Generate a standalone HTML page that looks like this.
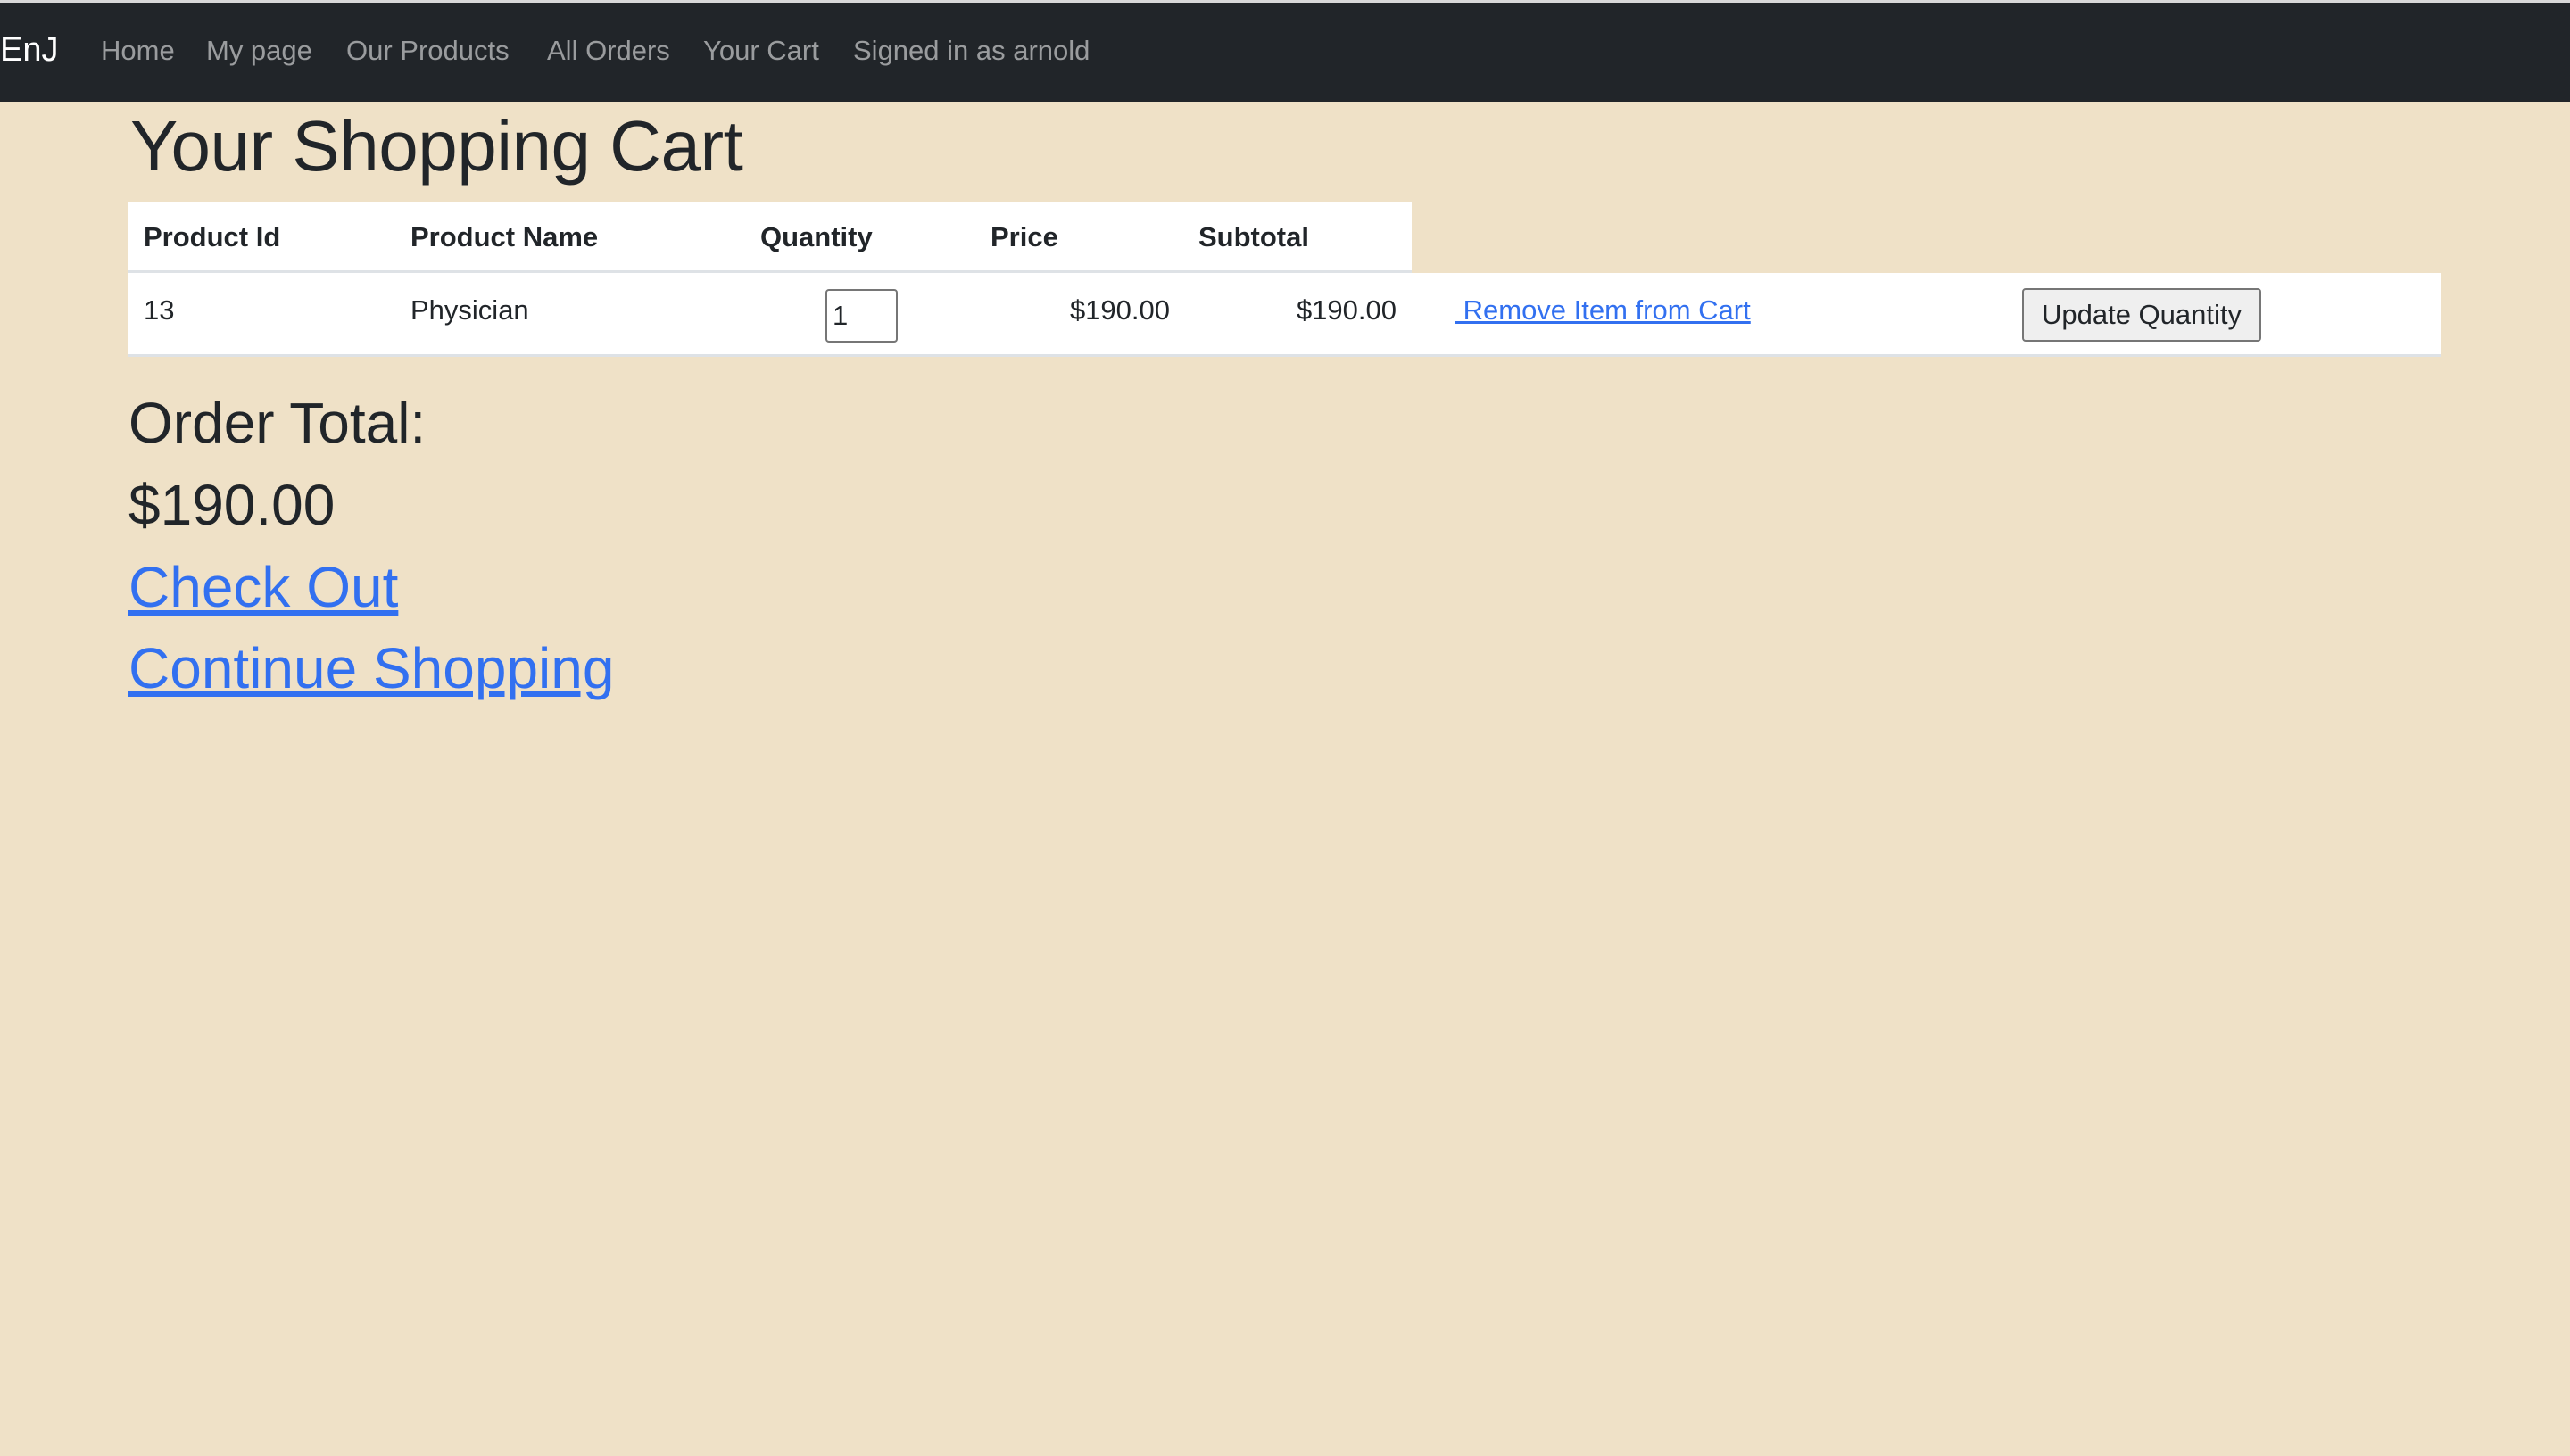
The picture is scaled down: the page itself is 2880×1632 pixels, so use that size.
<!DOCTYPE html>
<html><head><meta charset="utf-8"><style>
*{margin:0;padding:0;box-sizing:border-box}
body{width:2880px;height:1632px;background:#efe1c7;font-family:"Liberation Sans",sans-serif;color:#212529;position:relative;overflow:hidden}
.top{position:absolute;left:0;top:0;width:2880px;height:3px;background:#d8d8d8}
.nav{position:absolute;left:0;top:3px;width:2880px;height:111px;background:#212529}
.nav span{position:absolute;top:36px;font-size:31px;color:rgba(255,255,255,.55);white-space:nowrap}
.nav .brand{color:#fff;font-size:38px;top:32px;left:0}
h1{position:absolute;left:146px;top:118px;font-size:80px;font-weight:500;letter-spacing:-0.5px;white-space:nowrap}
.hdr{position:absolute;left:144px;top:226px;width:1438px;height:80px;background:#fff;border-bottom:3px solid #dee2e6}
.row{position:absolute;left:144px;top:306px;width:2592px;height:94px;background:#fff;border-bottom:3px solid #dee2e6}
.th{position:absolute;top:248px;font-size:31px;font-weight:bold;white-space:nowrap}
.td{position:absolute;top:330px;font-size:31px;white-space:nowrap}
.inp{position:absolute;left:925px;top:324px;width:81px;height:60px;border:2px solid #767676;border-radius:4px;background:#fff;font-size:31px;padding:10px 0 0 6px}
.btn{position:absolute;left:2266px;top:323px;width:268px;height:60px;border:2px solid #767676;border-radius:4px;background:#efefef;font-size:31px;text-align:center;line-height:56px}
.lnk{color:#3270f0;text-decoration:underline}
.big{position:absolute;left:144px;font-size:64px;white-space:nowrap}
</style></head><body>
<div class="top"></div>
<div class="nav">
<span class="brand">EnJ</span>
<span style="left:113px">Home</span>
<span style="left:231px">My page</span>
<span style="left:388px">Our Products</span>
<span style="left:613px">All Orders</span>
<span style="left:788px">Your Cart</span>
<span style="left:956px">Signed in as arnold</span>
</div>
<h1>Your Shopping Cart</h1>
<div class="hdr"></div>
<div class="row"></div>
<div class="th" style="left:161px">Product Id</div>
<div class="th" style="left:460px">Product Name</div>
<div class="th" style="left:852px">Quantity</div>
<div class="th" style="left:1110px">Price</div>
<div class="th" style="left:1343px">Subtotal</div>
<div class="td" style="left:161px">13</div>
<div class="td" style="left:460px">Physician</div>
<div class="inp">1</div>
<div class="td" style="left:1150px;width:161px;text-align:right">$190.00</div>
<div class="td" style="left:1400px;width:165px;text-align:right">$190.00</div>
<div class="td lnk" style="left:1631px">&nbsp;Remove Item from Cart</div>
<div class="btn">Update Quantity</div>
<div class="big" style="top:437px">Order Total:</div>
<div class="big" style="top:529px;font-weight:500">$190.00</div>
<div class="big lnk" style="top:621px">Check Out</div>
<div class="big lnk" style="top:712px">Continue Shopping</div>
</body></html>
